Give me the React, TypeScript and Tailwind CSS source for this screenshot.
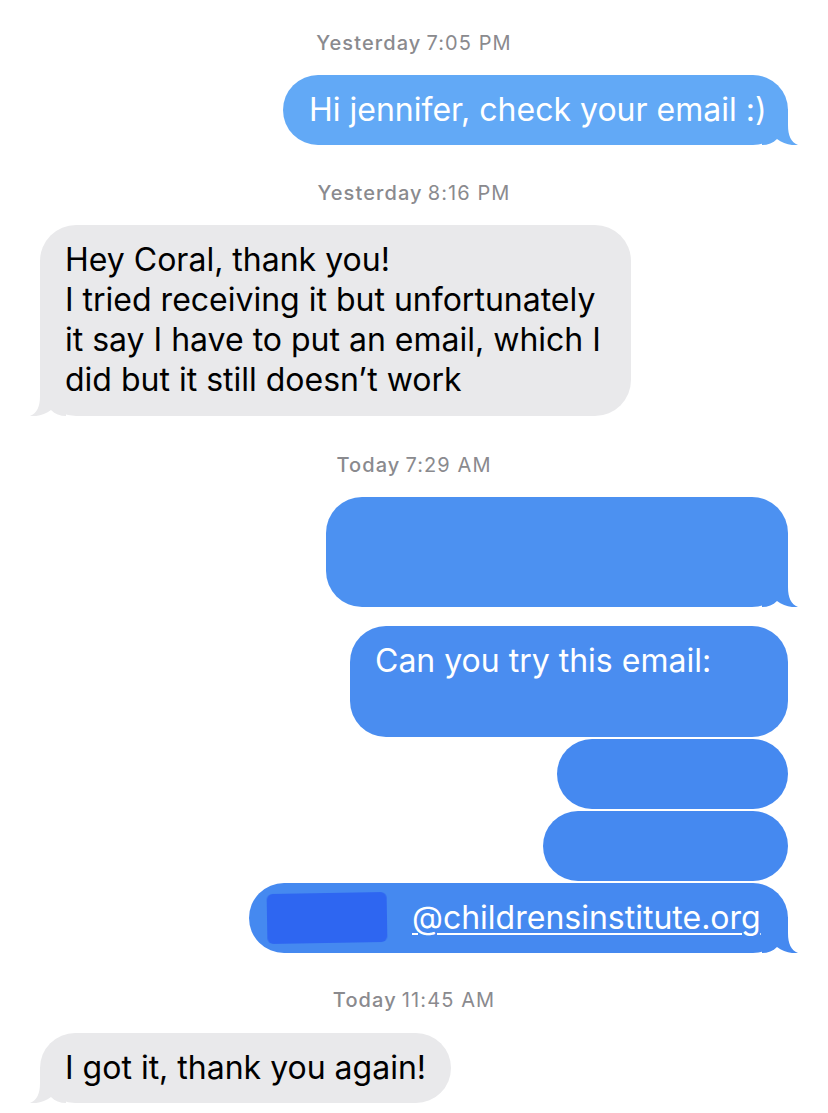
import React from "react";

const FONT = { fontFamily: "Inter, 'Noto Sans', Roboto, sans-serif" };

function Tail({ color, side }: { color: string; side: "left" | "right" }) {
  return (
    <svg
      width="36"
      height="36"
      viewBox="0 0 36 36"
      className={side === "right" ? "absolute bottom-0 right-[-10px]" : "absolute bottom-0 left-[-10px] -scale-x-100"}
    >
      <path
        d="M0 0 L26 0 L26 16 C26 27 29 33 36 36 C30 36.8 21 35 15 30 C11 34 6 36 0 36 Z"
        fill={color}
      />
    </svg>
  );
}

function Stamp({ day, time, className }: { day: string; time: string; className: string }) {
  return (
    <div className={"flex justify-center text-[20px] leading-[24px] tracking-[1.1px] text-[#8a8a8e] " + className}>
      <span className="font-medium">{day}</span>
      <span className="ml-[5px]">{time}</span>
    </div>
  );
}

export default function App() {
  return (
    <div className="min-h-[1113px] w-[828px] bg-white px-10 pt-[31px]" style={FONT}>
      <Stamp day="Yesterday" time="7:05 PM" className="" />

      <div className="mt-5 flex justify-end">
        <div className="relative h-[70px] w-[505px] rounded-[36px] bg-[#62a9f6] pl-[26px] pt-[15px] text-[32px] leading-[40px] text-white whitespace-nowrap">
          <span className="relative z-10">Hi jennifer, check your email :)</span>
          <Tail color="#62a9f6" side="right" />
        </div>
      </div>

      <Stamp day="Yesterday" time="8:16 PM" className="mt-[36px]" />

      <div className="mt-5 flex justify-start">
        <div className="relative h-[191px] w-[591px] rounded-[36px] bg-[#e9e9eb] pl-[25px] pt-[15px] text-[32px] leading-[40px] text-black whitespace-nowrap">
          <div className="relative z-10">
            Hey Coral, thank you!
            <br />
            I tried receiving it but unfortunately
            <br />
            it say I have to put an email, which I
            <br />
            did but it still doesn’t work
          </div>
          <Tail color="#e9e9eb" side="left" />
        </div>
      </div>

      <Stamp day="Today" time="7:29 AM" className="mt-[37px]" />

      <div className="mt-5 flex flex-col items-end">
        <div className="relative h-[110px] w-[462px] rounded-[36px] bg-[#4c91f1]">
          <Tail color="#4c91f1" side="right" />
        </div>

        <div className="mt-[19px] h-[111px] w-[438px] rounded-[36px] bg-[#4a8df0] pl-[25px] pt-[15px] text-[32px] leading-[40px] text-white whitespace-nowrap">
          Can you try this email:
        </div>

        <div className="mt-[2px] h-[70px] w-[231px] rounded-[36px] bg-[#4589f0]" />

        <div className="mt-[2px] h-[70px] w-[245px] rounded-[36px] bg-[#4589f0]" />

        <div className="relative mt-[2px] flex h-[70px] w-[539px] items-center rounded-[36px] bg-[#4589f0] pl-[18px] text-[32px] text-white whitespace-nowrap">
          <div className="h-[50px] w-[120px] -rotate-1 rounded-[6px] bg-[#2e66f1] blur-[0.6px]" />
          <span className="relative z-10 ml-[25px] underline decoration-[1.5px] underline-offset-[4px]">
            @childrensinstitute.org
          </span>
          <Tail color="#4589f0" side="right" />
        </div>
      </div>

      <Stamp day="Today" time="11:45 AM" className="mt-[35px]" />

      <div className="mt-[21px] flex justify-start">
        <div className="relative h-[70px] w-[411px] rounded-[36px] bg-[#e9e9eb] pl-[25px] pt-[15px] text-[32px] leading-[40px] text-black whitespace-nowrap">
          <span className="relative z-10">I got it, thank you again!</span>
          <Tail color="#e9e9eb" side="left" />
        </div>
      </div>
    </div>
  );
}
